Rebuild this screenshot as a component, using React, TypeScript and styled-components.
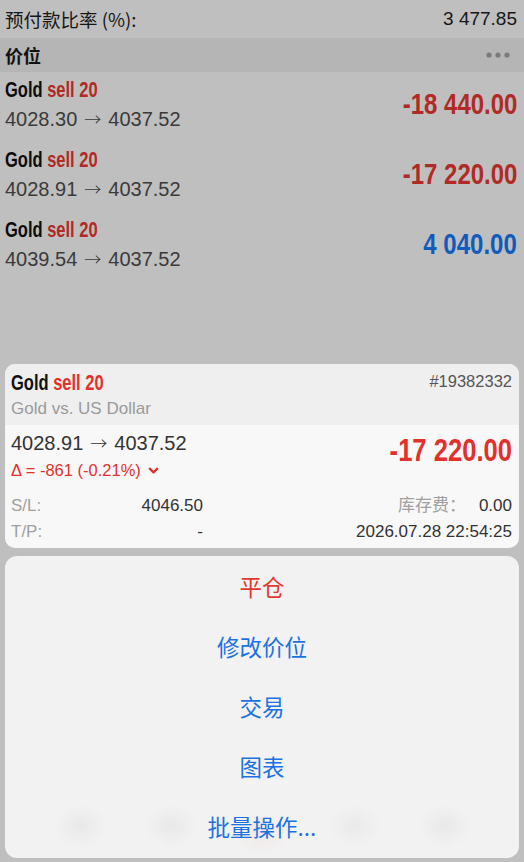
import styled, { createGlobalStyle } from "styled-components";
import { ChevronDown } from "lucide-react";

const GlobalStyle = createGlobalStyle`
  html, body {
    margin: 0;
    padding: 0;
    background: #bfbfbf;
    overflow: hidden;
  }
  * {
    box-sizing: border-box;
  }
`;

const sans = `"Liberation Sans", Arial, "Noto Sans CJK SC", sans-serif`;
const cjk = `"Noto Sans CJK SC", "Liberation Sans", sans-serif`;

const Page = styled.div`
  height: 862px;
  display: flex;
  flex-direction: column;
  background: #bfbfbf;
  font-family: ${sans};
  overflow: hidden;
`;

const SummaryRow = styled.div`
  height: 38px;
  display: flex;
  justify-content: space-between;
  align-items: center;
  padding: 0 7px 0 5px;
  font-size: 19px;
  color: #161616;
`;

const SummaryLabel = styled.span`
  font-family: ${cjk};
  font-size: 18.5px;
`;

const SectionHeader = styled.div`
  height: 34px;
  display: flex;
  justify-content: space-between;
  align-items: center;
  padding: 0 14px 0 5px;
  background: #b5b5b5;
  font-family: ${cjk};
  font-size: 18px;
  font-weight: bold;
  color: #111;
`;

const PositionRow = styled.div`
  height: 70px;
  display: flex;
  justify-content: space-between;
  align-items: flex-start;
  padding: 6px 7px 0 5px;
`;

const Info = styled.div`
  display: flex;
  flex-direction: column;
  align-items: flex-start;
`;

/* condensed bold face, squeezed from Liberation Sans Bold */
const Title = styled.span<{ dim?: boolean }>`
  display: inline-block;
  font-weight: bold;
  font-size: 22px;
  line-height: 24px;
  white-space: nowrap;
  transform: scaleX(0.75);
  transform-origin: left center;
  color: ${(p) => (p.dim ? "#0c0c0c" : "#111")};
`;

const Side = styled.span<{ dim?: boolean }>`
  color: ${(p) => (p.dim ? "#b02a26" : "#e2302b")};
`;

const Prices = styled.div<{ dim?: boolean; flush?: boolean }>`
  font-size: 20px;
  line-height: 24px;
  white-space: nowrap;
  margin-top: ${(p) => (p.flush ? "0" : "5px")};
  color: ${(p) => (p.dim ? "#3a3a3a" : "#333")};
`;

const Arrow = styled.span`
  font-family: ${cjk};
  font-size: 17px;
  font-weight: 300;
  margin: 0 7px;
`;

const Profit = styled.span<{ tone: "loss" | "gain"; dim?: boolean; big?: boolean }>`
  display: inline-block;
  font-weight: bold;
  font-size: ${(p) => (p.big ? "32px" : "30px")};
  line-height: 34px;
  white-space: nowrap;
  transform: scaleX(0.8);
  transform-origin: right center;
  margin-top: ${(p) => (p.big ? "2px" : "9px")};
  color: ${(p) =>
    p.tone === "gain"
      ? p.dim ? "#0f5cbc" : "#1a73e8"
      : p.dim ? "#b02a26" : "#e2302b"};
`;

const Bottom = styled.div`
  margin-top: auto;
  display: flex;
  flex-direction: column;
  gap: 8px;
  padding: 0 5px 4px;
`;

const Card = styled.div`
  border-radius: 10px;
  overflow: hidden;
  background: #f8f8f8;
`;

const CardHeader = styled.div`
  background: #efefef;
  padding: 7px 7px 5px 6px;
  display: flex;
  justify-content: space-between;
  align-items: flex-start;
`;

const Ticket = styled.div`
  font-size: 16.5px;
  line-height: 18px;
  margin-top: 1px;
  color: #555;
`;

const Description = styled.div`
  font-size: 17px;
  line-height: 22px;
  margin-top: 3px;
  color: #9a9a9a;
`;

const CardBody = styled.div`
  padding: 6px 7px 5px 6px;
`;

const CardTop = styled.div`
  display: flex;
  justify-content: space-between;
  align-items: flex-start;
`;

const Delta = styled.div`
  display: flex;
  align-items: center;
  gap: 5px;
  margin-top: 5px;
  font-size: 16.5px;
  line-height: 20px;
  color: #e2302b;
`;

const DetailRow = styled.div<{ first?: boolean }>`
  display: flex;
  align-items: baseline;
  height: 22px;
  margin-top: ${(p) => (p.first ? "13px" : "6px")};
  font-size: 17px;
  line-height: 22px;
`;

const DetailHalf = styled.div`
  width: 192px;
  display: flex;
  align-items: baseline;
  justify-content: space-between;
`;

const DetailRest = styled.div`
  flex: 1;
  display: flex;
  align-items: baseline;
  justify-content: flex-end;
  gap: 13px;
`;

const Label = styled.span`
  color: #a0a0a0;
`;

const CjkLabel = styled(Label)`
  font-family: ${cjk};
  font-size: 17px;
`;

const Value = styled.span`
  color: #333;
`;

const Sheet = styled.div`
  height: 302px;
  border-radius: 12px;
  overflow: hidden;
  display: flex;
  flex-direction: column;
  background:
    radial-gradient(ellipse 26px 22px at 76px 270px, rgba(215, 215, 215, 0.35), transparent),
    radial-gradient(ellipse 26px 22px at 166px 270px, rgba(215, 215, 215, 0.35), transparent),
    radial-gradient(ellipse 26px 22px at 256px 278px, rgba(235, 215, 205, 0.3), transparent),
    radial-gradient(ellipse 26px 22px at 350px 270px, rgba(215, 215, 215, 0.3), transparent),
    radial-gradient(ellipse 26px 22px at 440px 270px, rgba(215, 215, 215, 0.35), transparent),
    #f2f2f2;
`;

const SheetItem = styled.div<{ destructive?: boolean }>`
  height: 60px;
  display: flex;
  justify-content: center;
  align-items: center;
  font-family: ${cjk};
  font-size: 22.5px;
  color: ${(p) => (p.destructive ? "#e0392e" : "#1b72e0")};
`;

function MoreDots() {
  return (
    <svg width="24" height="6" viewBox="0 0 24 6">
      <circle cx="3" cy="3" r="2.6" fill="#7a7a7a" />
      <circle cx="12" cy="3" r="2.6" fill="#7a7a7a" />
      <circle cx="21" cy="3" r="2.6" fill="#7a7a7a" />
    </svg>
  );
}

const positions = [
  { open: "4028.30", profit: "-18 440.00", tone: "loss" as const },
  { open: "4028.91", profit: "-17 220.00", tone: "loss" as const },
  { open: "4039.54", profit: "4 040.00", tone: "gain" as const },
];

const actions = ["平仓", "修改价位", "交易", "图表", "批量操作..."];

export default function App() {
  return (
    <Page>
      <GlobalStyle />
      <SummaryRow>
        <SummaryLabel>预付款比率 (%):</SummaryLabel>
        <span>3 477.85</span>
      </SummaryRow>
      <SectionHeader>
        <span>价位</span>
        <MoreDots />
      </SectionHeader>
      {positions.map((p) => (
        <PositionRow key={p.open}>
          <Info>
            <Title dim>
              Gold <Side dim>sell 20</Side>
            </Title>
            <Prices dim>
              {p.open}
              <Arrow>→</Arrow>
              4037.52
            </Prices>
          </Info>
          <Profit tone={p.tone} dim>
            {p.profit}
          </Profit>
        </PositionRow>
      ))}

      <Bottom>
        <Card>
          <CardHeader>
            <Info>
              <Title>
                Gold <Side>sell 20</Side>
              </Title>
              <Description>Gold vs. US Dollar</Description>
            </Info>
            <Ticket>#19382332</Ticket>
          </CardHeader>
          <CardBody>
            <CardTop>
              <Info>
                <Prices flush>
                  4028.91
                  <Arrow>→</Arrow>
                  4037.52
                </Prices>
                <Delta>
                  Δ = -861 (-0.21%)
                  <ChevronDown size={15} strokeWidth={3.5} />
                </Delta>
              </Info>
              <Profit tone="loss" big>
                -17 220.00
              </Profit>
            </CardTop>
            <DetailRow first>
              <DetailHalf>
                <Label>S/L:</Label>
                <Value>4046.50</Value>
              </DetailHalf>
              <DetailRest>
                <CjkLabel>库存费：</CjkLabel>
                <Value>0.00</Value>
              </DetailRest>
            </DetailRow>
            <DetailRow>
              <DetailHalf>
                <Label>T/P:</Label>
                <Value>-</Value>
              </DetailHalf>
              <DetailRest>
                <Value>2026.07.28 22:54:25</Value>
              </DetailRest>
            </DetailRow>
          </CardBody>
        </Card>

        <Sheet>
          {actions.map((a, i) => (
            <SheetItem key={a} destructive={i === 0}>
              {a}
            </SheetItem>
          ))}
        </Sheet>
      </Bottom>
    </Page>
  );
}
